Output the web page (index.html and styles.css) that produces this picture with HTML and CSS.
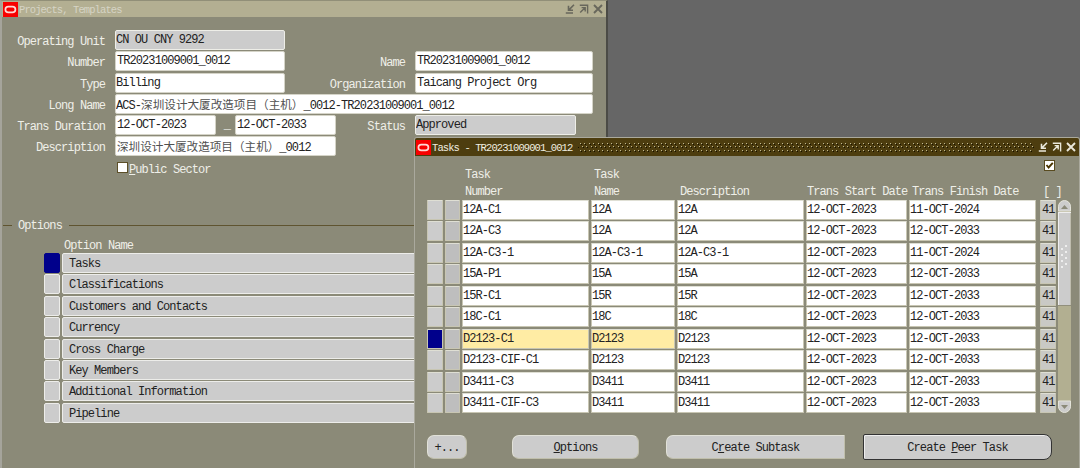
FILE: index.html
```html
<!DOCTYPE html>
<html lang="en">
<head>
<meta charset="utf-8">
<title>Projects, Templates</title>
<link rel="stylesheet" href="styles.css">
</head>
<body>
<svg class="defs" width="0" height="0" aria-hidden="true">
  <symbol id="logo" viewBox="0 0 15 15"><rect width="15" height="15" fill="#f80000"/><rect x="2.4" y="4.6" width="10" height="5.8" rx="2.9" fill="none" stroke="#ffd9d6" stroke-width="1.7"/></symbol>
  <symbol id="min" viewBox="0 0 10 10"><path d="M9 .8 4.2 5.6M3.5 1.8V6.3H8M.8 9H8" fill="none" stroke="currentColor" stroke-width="1.6"/></symbol>
  <symbol id="max" viewBox="0 0 10 10"><path d="M.8 1.2H8.6V9.6M1.2 8.6 6 3.8M2.6 3.6H6.2V7.4" fill="none" stroke="currentColor" stroke-width="1.4"/></symbol>
  <symbol id="close" viewBox="0 0 10 10"><path d="M1 1 9 9M9 1 1 9" fill="none" stroke="currentColor" stroke-width="1.9"/></symbol>
</svg>
<main class="desktop">
  <section class="window project">
    <header class="titlebar">
      <svg class="logo"><use href="#logo"/></svg><span class="title">Projects, Templates</span>
      <span class="controls"><svg><use href="#min"/></svg><svg><use href="#max"/></svg><svg><use href="#close"/></svg></span>
    </header>
    <div class="form">
      <div class="row"><label class="first">Operating Unit</label><span class="field w170 readonly">CN OU CNY 9292</span></div>
      <div class="row"><label class="first">Number</label><span class="field w170 pad">TR20231009001_0012</span><label class="second">Name</label><span class="field w178 pad">TR20231009001_0012</span></div>
      <div class="row"><label class="first">Type</label><span class="field w170">Billing</span><label class="second">Organization</label><span class="field w178 pad">Taicang Project Org</span></div>
      <div class="row"><label class="first">Long Name</label><span class="field w478">ACS-<span class="cjk">深圳设计大厦改造项目（主机）</span>_0012-TR20231009001_0012</span></div>
      <div class="row"><label class="first">Trans Duration</label><span class="field w101 pad">12-OCT-2023</span><span class="dash">_</span><span class="field w101 pad">12-OCT-2033</span><label class="status">Status</label><span class="field w161 readonly">Approved</span></div>
      <div class="row"><label class="first">Description</label><span class="field w221 pad"><span class="cjk">深圳设计大厦改造项目（主机）</span>_0012</span></div>
    </div>
    <div class="sector"><span class="box"></span><span><u>P</u>ublic Sector</span></div>
    <div class="group"><span>Options</span></div>
    <div class="option-head">Option Name</div>
    <div class="options">
      <div class="option"><i class="current"></i><span>Tasks</span></div>
      <div class="option"><i></i><span>Classifications</span></div>
      <div class="option"><i></i><span>Customers and Contacts</span></div>
      <div class="option"><i></i><span>Currency</span></div>
      <div class="option"><i></i><span>Cross Charge</span></div>
      <div class="option"><i></i><span>Key Members</span></div>
      <div class="option"><i></i><span>Additional Information</span></div>
      <div class="option"><i></i><span>Pipeline</span></div>
    </div>
  </section>

  <section class="window tasks">
    <header class="titlebar active">
      <svg class="logo"><use href="#logo"/></svg><span class="title">Tasks - TR20231009001_0012</span>
      <svg class="grip" shape-rendering="crispEdges"><defs><pattern id="dots" width="9" height="11" patternUnits="userSpaceOnUse"><path d="M6 1h1v1H6zM2 1h1v1H2zM4 4h1v1H4zM8 4h1v1H8zM2 8h1v1H2zM6 8h1v1H6z" fill="#c0b893"/><path d="M7 2h1v1H7zM3 2h1v1H3zM5 5h1v1H5zM0 5h1v1H0zM3 9h1v1H3zM7 9h1v1H7z" fill="#171100"/></pattern></defs><rect width="100%" height="11" fill="url(#dots)"/></svg>
      <span class="controls"><svg><use href="#min"/></svg><svg><use href="#max"/></svg><svg><use href="#close"/></svg></span>
    </header>
    <div class="check-row"><svg class="check" viewBox="0 0 11 11"><rect x=".5" y=".5" width="10" height="10" fill="#fff" stroke="#594b20"/><path d="M2.5 5 4.6 7.5 8.8 2.8" fill="none" stroke="#4a3500" stroke-width="1.9"/></svg></div>
    <div class="heads columns">
      <span></span><span></span><span>Task<br>Number</span><span>Task<br>Name</span><span>Description</span><span class="date">Trans Start Date</span><span>Trans Finish Date</span><span class="bracket">[ ]</span>
    </div>
    <div class="grid-area">
      <div class="rows">
        <div class="columns record"><i></i><i></i><b>12A-C1</b><b>12A</b><b>12A</b><b>12-OCT-2023</b><b>11-OCT-2024</b><em>41</em></div>
        <div class="columns record"><i></i><i></i><b>12A-C3</b><b>12A</b><b>12A</b><b>12-OCT-2023</b><b>12-OCT-2033</b><em>41</em></div>
        <div class="columns record"><i></i><i></i><b>12A-C3-1</b><b>12A-C3-1</b><b>12A-C3-1</b><b>12-OCT-2023</b><b>11-OCT-2024</b><em>41</em></div>
        <div class="columns record"><i></i><i></i><b>15A-P1</b><b>15A</b><b>15A</b><b>12-OCT-2023</b><b>12-OCT-2033</b><em>41</em></div>
        <div class="columns record"><i></i><i></i><b>15R-C1</b><b>15R</b><b>15R</b><b>12-OCT-2023</b><b>12-OCT-2033</b><em>41</em></div>
        <div class="columns record"><i></i><i></i><b>18C-C1</b><b>18C</b><b>18C</b><b>12-OCT-2023</b><b>12-OCT-2033</b><em>41</em></div>
        <div class="columns record selected"><i></i><i></i><b>D2123-C1</b><b>D2123</b><b>D2123</b><b>12-OCT-2023</b><b>12-OCT-2033</b><em>41</em></div>
        <div class="columns record"><i></i><i></i><b>D2123-CIF-C1</b><b>D2123</b><b>D2123</b><b>12-OCT-2023</b><b>12-OCT-2033</b><em>41</em></div>
        <div class="columns record"><i></i><i></i><b>D3411-C3</b><b>D3411</b><b>D3411</b><b>12-OCT-2023</b><b>12-OCT-2033</b><em>41</em></div>
        <div class="columns record"><i></i><i></i><b>D3411-CIF-C3</b><b>D3411</b><b>D3411</b><b>12-OCT-2023</b><b>12-OCT-2033</b><em>41</em></div>
      </div>
      <svg class="scroll" viewBox="0 0 13 214">
        <rect x="0" y="6" width="13" height="202" fill="#b2af91"/>
        <path d="M.5 11V6.500a6 6 0 0 1 12 0V11z" fill="#ccc" stroke="#e4e4da"/>
        <path d="M3 9h7L6.500 5z" fill="#8b8a78"/>
        <rect x=".5" y="12" width="12" height="93" fill="#ccc"/>
        <path d="M0 12.500H13M.5 12V105" stroke="#eee" fill="none"/>
        <path d="M0 105.500H13" stroke="#918f7c"/>
        <g fill="#eee"><rect x="7" y="45" width="2" height="2"/><rect x="3" y="48" width="2" height="2"/><rect x="7" y="51" width="2" height="2"/><rect x="3" y="54" width="2" height="2"/><rect x="7" y="57" width="2" height="2"/><rect x="3" y="60" width="2" height="2"/><rect x="7" y="63" width="2" height="2"/><rect x="3" y="66" width="2" height="2"/></g>
        <path d="M.5 201H12.500V206.500a6 6 0 0 1-12 0z" fill="#ccc" stroke="#e4e4da"/>
        <path d="M3 205h7L6.500 209z" fill="#8b8a78"/>
      </svg>
    </div>
    <div class="buttons">
      <button class="more">+...</button>
      <button class="opts"><span><u>O</u>ptions</span></button>
      <button class="sub"><span>C<u>r</u>eate Subtask</span></button>
      <button class="peer"><span>Create <u>P</u>eer Task</span></button>
    </div>
  </section>
</main>
</body>
</html>
```

FILE: styles.css
```css
* { box-sizing: border-box; }

body {
  margin: 0;
  width: 1080px;
  height: 468px;
  overflow: hidden;
  background: #666;
  color: #222;
  font: 12px/14px "Liberation Mono", "Noto Sans CJK SC", monospace;
  letter-spacing: -0.93px;
}

.defs { position: absolute; }

.desktop {
  position: relative;
  height: 468px;
  overflow: hidden;
}

u { text-underline-offset: 1px; }

.window { background: #8b8a78; }

.project {
  width: 608px;
  height: 468px;
  border-left: 2px solid #a5a49b;
  border-right: 2px solid #4b4b46;
  border-top: 1px solid #918f78;
}

.titlebar {
  display: flex;
  align-items: center;
  height: 16px;
  background: #b3af92;
  color: #d6d4c5;
  font-size: 10.5px;
  letter-spacing: -0.9px;
}

.logo { width: 15px; height: 15px; margin-left: 1px; flex: none; }
.title { margin-left: 1px; padding-top: 2px; white-space: pre; }
.controls { display: flex; gap: 4px; margin-left: auto; color: #68675c; padding-right: 3px; }
.controls svg { width: 10px; height: 10px; }

.form { padding-top: 13px; }
.row { display: flex; height: 21.3px; }

.row label, .dash {
  padding-top: 5px;
  color: #efefe8;
  text-align: right;
  white-space: pre;
}
.first { width: 103px; margin-right: 10px; }
.second { width: 120px; margin-right: 10px; }
.status { width: 69px; margin-right: 10px; }
.row .dash { width: 19px; padding: 3px 5px 0 0; }

.field {
  height: 20px;
  padding: 2px 0;
  background: #fff;
  border: 1px solid #d5d4c8;
  border-radius: 2px;
  white-space: pre;
  overflow: hidden;
}
.readonly { background: #ccc; border-color: #eeeee8; }
.pad { padding-left: 1px; }
.w101 { width: 101px; }
.w161 { width: 161px; }
.w170 { width: 170px; }
.w178 { width: 178px; }
.w221 { width: 221px; }
.w478 { width: 478px; }
.cjk { font: 11.6px/14px "Noto Sans CJK SC", sans-serif; letter-spacing: 0; color: #505050; }

.sector {
  display: flex;
  margin: 4px 0 0 115px;
  color: #efefe8;
}
.sector span:last-child { padding: 1px 0 0 1px; }
.box { width: 11px; height: 11px; background: #fff; border: 1px solid #5c4f28; }

.group {
  display: flex;
  align-items: center;
  margin-top: 42px;
  height: 14px;
  color: #efefe8;
  gap: 6px;
}
.group::before, .group::after { content: ""; height: 1px; background: #5f5430; }
.group::before { width: 9px; margin-left: 1px; }
.group::after { flex: 1; margin-left: 1px; }

.option-head { margin: 6px 0 0 62px; color: #efefe8; }
.options { margin: 0 0 0 42px; }
.option { display: flex; height: 21.45px; gap: 2px; }
.option i, .option span {
  height: 20px;
  background: #ccc;
  border: 1px solid #ededea;
  border-radius: 2px;
}
.option i { width: 16px; }
.option .current { background: #00008b; border-color: #00008b; }
.option span { width: 380px; padding: 3px 6px; }

.tasks {
  position: absolute;
  left: 414px;
  top: 137px;
  width: 666px;
  height: 331px;
  border: 1px solid #aaa99d;
  border-bottom: 0;
  border-radius: 3px 3px 0 0;
  overflow: hidden;
}
.active { height: 18px; background: #4d3d0f; color: #f0eee0; }
.active .controls { color: #eae8da; padding-right: 3px; }
.grip { width: 456px; height: 11px; margin-left: 6px; }

.check-row { display: flex; height: 14px; padding: 4px 0 0 629px; }
.check { width: 11px; height: 11px; }

.columns {
  display: grid;
  grid-template-columns: 18px 17px 129px 86px 129px 103px 131px 16px;
  padding-left: 12px;
}
.heads {
  height: 33px;
  margin-top: -3px;
  align-items: end;
  color: #efefe8;
  line-height: 17px;
  white-space: nowrap;
}
.heads span { padding-left: 3px; }
.heads .date { padding-left: 1px; }
.heads .bracket { padding-left: 3px; }

.grid-area { display: flex; }
.rows { width: 643px; }
.record { height: 21.45px; }
.record > * {
  height: 20px;
  margin-right: 2px;
  padding: 2px 0 0;
  background: #fff;
  border: 1px solid #c8c6b3;
  border-top-color: #dfdfd4;
  border-radius: 1px;
  font-style: normal;
  font-weight: normal;
}
.record > :first-child { background: #ccc; }
.record > :nth-child(2) { background: #bebebe; }
.record > :nth-child(7) { margin-right: 4px; }
.record > em { background: #c9c9c5; margin-right: 0; padding-left: 1px; }
.selected > :first-child { background: #00008b; }
.selected > :nth-child(3), .selected > :nth-child(4) { background: #ffeca4; }
.scroll { width: 13px; height: 214px; }

.buttons { display: flex; align-items: center; height: 28px; margin-top: 19px; padding-left: 12px; }
.buttons button {
  height: 24px;
  padding: 1px 0 0;
  color: #222;
  background: #ccc;
  border: 1px solid #e1e1d8;
  border-right-color: #c0bfac;
  border-bottom-color: #c0bfac;
  border-radius: 7px;
  font: inherit;
  letter-spacing: inherit;
}
.buttons .more { width: 40px; }
.buttons .opts { width: 127px; margin-left: 45px; }
.buttons .sub { width: 179px; margin-left: 27px; border-radius: 7px 0 0 7px; }
.buttons .peer { width: 189px; height: 26px; margin-left: 18px; border: 1.5px solid #333; border-radius: 2px 8px 8px 2px; box-shadow: inset 1px 1px #eee; }
```
